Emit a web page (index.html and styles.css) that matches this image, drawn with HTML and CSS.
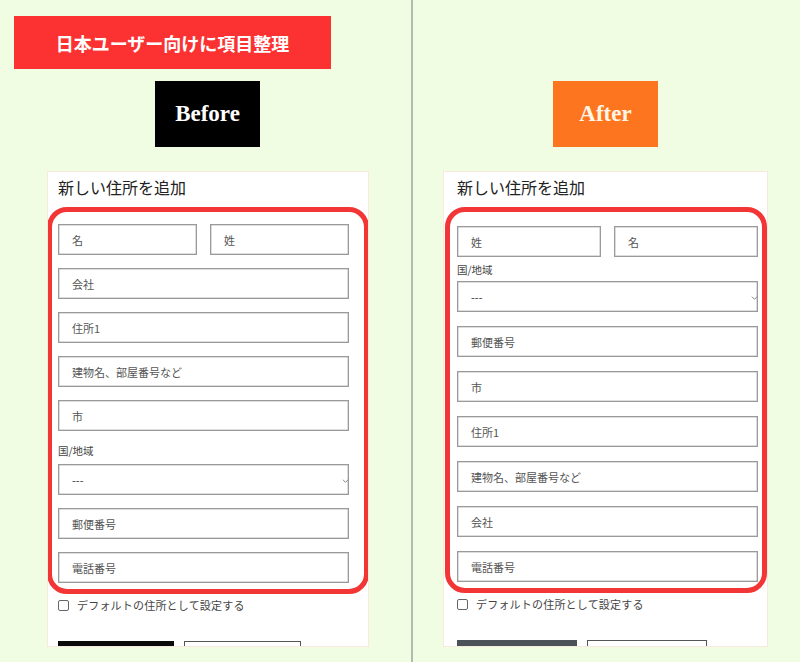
FILE: index.html
```html
<!DOCTYPE html>
<html lang="ja">
<head>
<meta charset="utf-8">
<link rel="stylesheet" href="styles.css">
</head>
<body>
<div class="page">
  <div class="panel panel-left">
    <div class="banner">日本ユーザー向けに項目整理</div>
    <div class="tag tag-before">Before</div>
    <div class="card card-left">
      <div class="card-title">新しい住所を追加</div>
      <div class="frame frame-left">
        <div class="row2">
          <div class="field">名</div>
          <div class="field">姓</div>
        </div>
        <div class="field">会社</div>
        <div class="field">住所1</div>
        <div class="field">建物名、部屋番号など</div>
        <div class="field">市</div>
        <div class="group">
          <div class="label">国/地域</div>
          <div class="field select">---<svg class="chev" viewBox="0 0 8 6"><path d="M1 1.5 L4 4.5 L7 1.5" fill="none" stroke="#777" stroke-width="1"/></svg></div>
        </div>
        <div class="field">郵便番号</div>
        <div class="field">電話番号</div>
      </div>
      <div class="check"><span class="box"></span><span>デフォルトの住所として設定する</span></div>
      <div class="buttons">
        <div class="btn btn-black"></div>
        <div class="btn btn-outline"></div>
      </div>
    </div>
  </div>
  <div class="divider"></div>
  <div class="panel panel-right">
    <div class="tag tag-after">After</div>
    <div class="card card-right">
      <div class="card-title">新しい住所を追加</div>
      <div class="frame frame-right">
        <div class="group">
          <div class="row2">
            <div class="field">姓</div>
            <div class="field">名</div>
          </div>
          <div class="label">国/地域</div>
          <div class="field select">---<svg class="chev" viewBox="0 0 8 6"><path d="M1 1.5 L4 4.5 L7 1.5" fill="none" stroke="#777" stroke-width="1"/></svg></div>
        </div>
        <div class="field">郵便番号</div>
        <div class="field">市</div>
        <div class="field">住所1</div>
        <div class="field">建物名、部屋番号など</div>
        <div class="field">会社</div>
        <div class="field">電話番号</div>
      </div>
      <div class="check"><span class="box"></span><span>デフォルトの住所として設定する</span></div>
      <div class="buttons">
        <div class="btn btn-dark"></div>
        <div class="btn btn-outline"></div>
      </div>
    </div>
  </div>
</div>
</body>
</html>
```
FILE: styles.css
```css
html, body {
  margin: 0;
  padding: 0;
}
body {
  background: #f1fde3;
  font-family: "Liberation Serif", "Noto Sans CJK JP", serif;
  color: #222;
}
.page {
  display: flex;
  height: 662px;
  overflow: hidden;
}
.panel {
  display: flex;
  flex-direction: column;
  align-items: flex-start;
}
.panel > *,
.card > *,
.frame > *,
.group > * {
  flex-shrink: 0;
}
.panel-left {
  width: 411px;
  padding-top: 16px;
}
.panel-right {
  width: 387px;
  padding-top: 81px;
}
.divider {
  width: 2px;
  background: #b6b9b1;
}
.banner {
  margin-left: 14px;
  width: 317px;
  height: 53px;
  background: #fc3232;
  color: #fff;
  font-family: "Noto Sans CJK JP", sans-serif;
  font-weight: 700;
  font-size: 18px;
  display: flex;
  align-items: center;
  justify-content: center;
}
.tag {
  width: 105px;
  height: 66px;
  color: #fff;
  font-family: "Liberation Serif", serif;
  font-weight: 700;
  font-size: 23px;
  display: flex;
  align-items: center;
  justify-content: center;
}
.tag-before {
  margin-top: 12px;
  margin-left: 155px;
  background: #000;
}
.tag-after {
  margin-left: 140px;
  background: #fd761f;
  color: #fdf5e6;
}
.card {
  margin-top: 24px;
  background: #fff;
  border: 1px solid #f7eadc;
  box-sizing: border-box;
  height: 476px;
  display: flex;
  flex-direction: column;
  overflow: hidden;
}
.card-left {
  margin-left: 47px;
  width: 322px;
}
.card-right {
  margin-left: 30px;
  width: 325px;
}
.card-title {
  height: 35px;
  padding-left: 10px;
  font-family: "Noto Sans CJK JP", sans-serif;
  font-size: 16px;
  line-height: 30px;
  color: #222;
}
.card-right .card-title {
  padding-left: 13px;
}
.frame {
  border: 5px solid #f23636;
  border-radius: 20px;
  display: flex;
  flex-direction: column;
  gap: 13px;
  box-sizing: border-box;
  margin-left: -1px;
  width: 322px;
}
.frame-left {
  padding: 12px 15px 6px 6px;
}
.frame-right {
  margin-left: 1px;
  padding: 14px 4px 6px 7px;
  gap: 14px;
}
.row2 {
  display: flex;
  gap: 13px;
}
.row2 .field {
  flex: 1;
}
.frame-right .row2 .field {
  flex: none;
  width: 144px;
}
.field {
  height: 31px;
  box-sizing: border-box;
  border: 1px solid #9a9a9a;
  box-shadow: inset 0 0 0 0.5px #bbb;
  padding-left: 13px;
  font-family: "Noto Sans CJK JP", sans-serif;
  font-size: 11px;
  color: #555;
  display: flex;
  align-items: center;
  position: relative;
  background: #fff;
}
.select {
  color: #333;
}
.chev {
  position: absolute;
  right: -1px;
  top: 13px;
  width: 7px;
  height: 6px;
}
.group {
  display: flex;
  flex-direction: column;
}
.label {
  font-family: "Noto Sans CJK JP", sans-serif;
  font-size: 10.5px;
  color: #444;
  display: flex;
  align-items: center;
  box-sizing: border-box;
}
.frame-left .group {
  margin-top: -13px;
}
.frame-left .group .label {
  height: 33px;
  padding-top: 5px;
}
.frame-right .group .label {
  height: 24px;
  padding-top: 0;
}
.check {
  display: flex;
  align-items: center;
  gap: 8px;
  margin-top: 3px;
  padding-left: 10px;
  font-family: "Noto Sans CJK JP", sans-serif;
  font-size: 11px;
  color: #444;
  letter-spacing: 0.2px;
}
.card-right .check {
  padding-left: 13px;
}
.box {
  width: 9px;
  height: 9px;
  border: 1px solid #666;
  border-radius: 2px;
  background: #fff;
}
.buttons {
  display: flex;
  gap: 10px;
  padding-left: 10px;
  margin-top: 28px;
}
.card-right .buttons {
  padding-left: 13px;
}
.btn {
  height: 20px;
  box-sizing: border-box;
}
.btn-black {
  width: 116px;
  background: #0a0a0a;
}
.btn-dark {
  width: 120px;
  background: #4b5159;
}
.btn-outline {
  width: 117px;
  border: 1px solid #555;
  background: #fff;
}
.card-right .btn-outline {
  width: 120px;
}
```
